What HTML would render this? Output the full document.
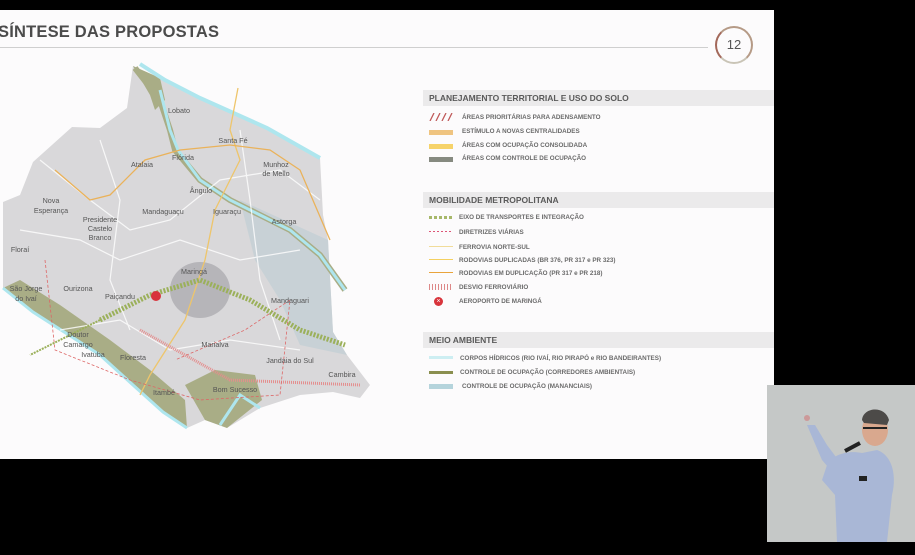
<!DOCTYPE html>
<html><head><meta charset="utf-8"><style>
body{margin:0;width:915px;height:555px;background:#000;position:relative;overflow:hidden;font-family:"Liberation Sans",sans-serif}
#slide{position:absolute;left:0;top:10px;width:774px;height:449px;background:#fcfbfc;overflow:hidden}
h1{position:absolute;left:-2px;top:13px;margin:0;font-size:16.5px;font-weight:bold;color:#4b4b4b;letter-spacing:0.2px}
.hl{position:absolute;left:0;top:37px;width:708px;height:1px;background:#cfcfcf}
.num{position:absolute;left:715px;top:16px;width:34px;height:34px;border-radius:50%;border:2px solid #b59a86;border-left-color:#a3685a;border-bottom-color:#c9c4b6;text-align:center;line-height:34px;font-size:13px;color:#555;background:#fcfbfc}
.sec{position:absolute;left:423px;width:351px;height:16px;background:#ebeaeb;font-size:8.5px;font-weight:bold;color:#5a5a5a;line-height:16px;padding-left:6px;box-sizing:border-box}
.it{position:absolute;font-size:6.3px;font-weight:bold;color:#6a6a6a;white-space:nowrap}
.sw{position:absolute;left:429px;width:24px;height:5px}
#cam{position:absolute;left:767px;top:385px;width:148px;height:157px;background:#c5c8c7;overflow:hidden}
</style></head><body>
<div id="slide">
<h1>SÍNTESE DAS PROPOSTAS</h1>
<div class="hl"></div>
<div class="num">12</div>

<svg width="380" height="449" viewBox="0 10 380 449" style="position:absolute;left:0;top:0">
<polygon points="133,66 160,78 200,98 267,128 320,158 323,215 328,240 333,332 347,355 370,385 360,398 333,392 300,395 260,408 227,428 205,420 187,428 163,412 133,385 100,355 33,312 3,288 3,202 20,195 33,162 72,127 100,128 127,108" fill="#d9d8da"/>
<polygon points="240,200 328,240 333,332 347,355 300,345 280,300 255,260" fill="#c3cfd4" opacity=".8"/>
<path d="M3,288 L33,312 L100,355 L133,385 L163,412 L187,428 L185,400 L150,370 L110,340 L60,305 L20,280 Z" fill="#a9ad86"/>
<path d="M185,385 L215,370 L255,375 L262,400 L227,428 L205,420 Z" fill="#a9ad86"/>
<path d="M133,66 L160,78 L165,100 L155,110 L150,95 Z" fill="#a9ad86"/>
<path d="M135,68 L160,100 L170,130 L175,150 L200,180 L230,200 L260,215 L290,230 L320,255 L345,290" fill="none" stroke="#a9ad86" stroke-width="6"/>
<path d="M140,64 L165,80 L200,98 L267,128 L320,158" fill="none" stroke="#aee6ee" stroke-width="4"/>
<path d="M160,90 L170,130 L178,150 L200,180 L230,200 L260,215 L290,230 L320,255 L345,290" fill="none" stroke="#aee6ee" stroke-width="3"/>
<path d="M3,288 L33,312 L100,355 L133,385 L163,412 L187,428" fill="none" stroke="#aee6ee" stroke-width="3"/>
<path d="M220,425 L240,395 L260,408" fill="none" stroke="#aee6ee" stroke-width="3"/>
<ellipse cx="200" cy="290" rx="30" ry="28" fill="#b6b5b9"/>
<g fill="none" stroke="#fff" stroke-width="1.2" opacity=".8">
<path d="M20,230 L80,240 L120,260 L180,240 L240,260 L300,250"/><path d="M40,160 L90,200 L130,230 L170,220 L220,180 L280,170 L320,200"/>
<path d="M60,330 L120,320 L170,350 L230,340 L300,350"/><path d="M100,140 L120,200 L110,280 L130,330"/><path d="M240,130 L250,200 L260,280 L280,340"/>
</g>
<g fill="none" stroke-width="1.3">
<path d="M238,88 L230,130 L240,160 L215,210 L205,260 L185,320 L150,375 L140,395" stroke="#eec56b"/>
<path d="M55,170 L90,200 L110,195 L145,160 L180,150 L230,145 L270,150 L300,170 L330,240" stroke="#eab25a"/>
<path d="M140,330 L230,380 L360,385" stroke="#e48d8d" stroke-width="3" stroke-dasharray="1 1"/>
<path d="M45,260 L55,350 L130,380 L200,400 L280,395 L290,300 L245,330 L175,360" stroke="#d66" stroke-dasharray="3 2" stroke-width=".8"/>
<path d="M100,320 L150,295 L200,280 L250,300 L300,330 L345,345" stroke="#9bb05a" stroke-width="5" stroke-dasharray="2 1.5"/>
<path d="M100,320 L30,355" stroke="#9bb05a" stroke-width="2" stroke-dasharray="2 1"/>
</g>
<circle cx="156" cy="296" r="5" fill="#d8343c"/>
<g font-size="7.2" fill="#555" text-anchor="middle" font-family="Liberation Sans,sans-serif">
<text x="179" y="113">Lobato</text><text x="233" y="143">Santa Fé</text><text x="183" y="160">Flórida</text><text x="142" y="167">Atalaia</text>
<text x="276" y="167">Munhoz</text><text x="276" y="176">de Mello</text><text x="201" y="193">Ângulo</text><text x="227" y="214">Iguaraçu</text>
<text x="163" y="214">Mandaguaçu</text><text x="284" y="224">Astorga</text><text x="51" y="203">Nova</text><text x="51" y="213">Esperança</text>
<text x="100" y="222">Presidente</text><text x="100" y="231">Castelo</text><text x="100" y="240">Branco</text><text x="20" y="252">Floraí</text>
<text x="194" y="274">Maringá</text><text x="26" y="291">São Jorge</text><text x="26" y="301">do Ivaí</text><text x="78" y="291">Ourizona</text>
<text x="120" y="299">Paiçandu</text><text x="290" y="303">Mandaguari</text><text x="78" y="337">Doutor</text><text x="78" y="347">Camargo</text>
<text x="215" y="347">Marialva</text><text x="93" y="357">Ivatuba</text><text x="133" y="360">Floresta</text><text x="290" y="363">Jandaia do Sul</text>
<text x="342" y="377">Cambira</text><text x="235" y="392">Bom Sucesso</text><text x="164" y="395">Itambé</text>
</g>
</svg>

<div class="sec" style="top:80px">PLANEJAMENTO TERRITORIAL E USO DO SOLO</div>
<svg style="position:absolute;left:429px;top:103px" width="26" height="8"><path d="M1,8 L5,0 M7,8 L11,0 M13,8 L17,0 M19,8 L23,0" stroke="#c05a5a" stroke-width="1.3"/></svg>
<div class="it" style="left:462px;top:104px">ÁREAS PRIORITÁRIAS PARA ADENSAMENTO</div>
<div class="sw" style="top:120px;background:#efc480"></div><div class="it" style="left:462px;top:118px">ESTÍMULO A NOVAS CENTRALIDADES</div>
<div class="sw" style="top:134px;background:#f6d36a"></div><div class="it" style="left:462px;top:132px">ÁREAS COM OCUPAÇÃO CONSOLIDADA</div>
<div class="sw" style="top:147px;background:#868a80"></div><div class="it" style="left:462px;top:145px">ÁREAS COM CONTROLE DE OCUPAÇÃO</div>

<div class="sec" style="top:182px">MOBILIDADE METROPOLITANA</div>
<div class="sw" style="top:206px;height:3px;background:repeating-linear-gradient(90deg,#a7b86a 0 3px,transparent 3px 5px)"></div><div class="it" style="left:459px;top:204px">EIXO DE TRANSPORTES E INTEGRAÇÃO</div>
<div class="sw" style="top:221px;height:1px;background:repeating-linear-gradient(90deg,#d57 0 2px,transparent 2px 4px)"></div><div class="it" style="left:459px;top:219px">DIRETRIZES VIÁRIAS</div>
<div class="sw" style="top:236px;height:1px;background:#f1dc9a"></div><div class="it" style="left:459px;top:234px">FERROVIA NORTE-SUL</div>
<div class="sw" style="top:249px;height:1px;background:#f4d060"></div><div class="it" style="left:459px;top:247px">RODOVIAS DUPLICADAS (BR 376, PR 317 e PR 323)</div>
<div class="sw" style="top:262px;height:1px;background:#e9a43c"></div><div class="it" style="left:459px;top:260px">RODOVIAS EM DUPLICAÇÃO (PR 317 e PR 218)</div>
<div class="sw" style="top:274px;height:6px;background:repeating-linear-gradient(90deg,#d88 0 1px,transparent 1px 3px)"></div><div class="it" style="left:459px;top:274px">DESVIO FERROVIÁRIO</div>
<div style="position:absolute;left:434px;top:287px;width:9px;height:9px;border-radius:50%;background:#d8343c;color:#fff;font-size:7px;line-height:9px;text-align:center">×</div><div class="it" style="left:459px;top:288px">AEROPORTO DE MARINGÁ</div>

<div class="sec" style="top:322px">MEIO AMBIENTE</div>
<div class="sw" style="top:346px;height:3px;background:#cdeef2"></div><div class="it" style="left:460px;top:345px">CORPOS HÍDRICOS (RIO IVAÍ, RIO PIRAPÓ e RIO BANDEIRANTES)</div>
<div class="sw" style="top:361px;height:3px;background:#8a8f4f"></div><div class="it" style="left:460px;top:359px">CONTROLE DE OCUPAÇÃO (CORREDORES AMBIENTAIS)</div>
<div class="sw" style="top:374px;background:#b5d4dc"></div><div class="it" style="left:462px;top:373px">CONTROLE DE OCUPAÇÃO (MANANCIAIS)</div>
</div>

<div id="cam">
<svg width="148" height="157" viewBox="0 0 148 157">
<path d="M60,80 C65,70 80,65 95,68 L110,65 C125,70 130,90 125,110 L120,157 L70,157 L68,110 L55,95 Z" fill="#a9b7d6"/>
<path d="M40,40 L55,75 L68,90 L75,80 L60,60 L48,40 Z" fill="#a9b7d6"/>
<ellipse cx="108" cy="45" rx="13" ry="16" fill="#d9a88e"/>
<path d="M95,35 C96,22 118,20 122,35 L120,40 L97,38 Z" fill="#4c4a48"/>
<path d="M96,43 L120,43" stroke="#222" stroke-width="2"/>
<path d="M78,66 L93,58" stroke="#222" stroke-width="4"/>
<rect x="92" y="91" width="8" height="5" fill="#222"/>
<circle cx="40" cy="33" r="3" fill="#c99"/>
</svg>
</div>
</body></html>
